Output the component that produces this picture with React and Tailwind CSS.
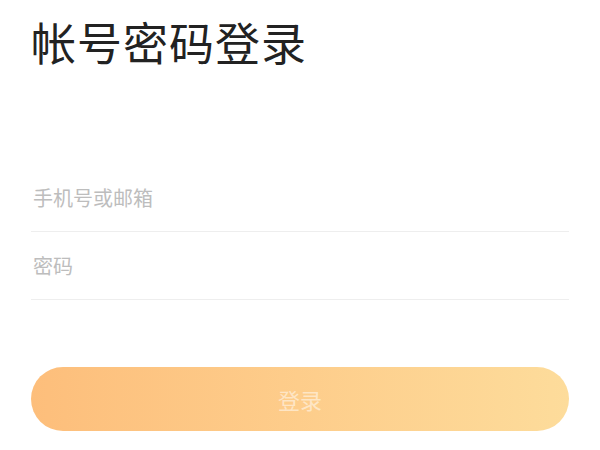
import React, { useState } from "react";

export default function App() {
  const [account, setAccount] = useState("");
  const [password, setPassword] = useState("");

  return (
    <div
      className="w-[600px] h-[450px] bg-white overflow-hidden px-[31px]"
      style={{ fontFamily: '"Noto Sans CJK SC", "Noto Sans", sans-serif' }}
    >
      {/* title */}
      <h1 className="pt-[19px] text-[45px] leading-[45px] font-normal tracking-[1px] text-[#222222]">
        帐号密码登录
      </h1>

      {/* form */}
      <form className="mt-[100px]" onSubmit={(e) => e.preventDefault()}>
        <div className="h-[68px] flex items-center border-b border-[#eeeeee]">
          <input
            className="w-full pl-[2px] text-[20px] leading-[20px] text-[#333] placeholder:text-[#bdbdbd] outline-none bg-transparent"
            placeholder="手机号或邮箱"
            value={account}
            onChange={(e) => setAccount(e.target.value)}
          />
        </div>
        <div className="h-[68px] flex items-center border-b border-[#eeeeee]">
          <input
            type="password"
            className="w-full pl-[2px] text-[20px] leading-[20px] text-[#333] placeholder:text-[#bdbdbd] outline-none bg-transparent"
            placeholder="密码"
            value={password}
            onChange={(e) => setPassword(e.target.value)}
          />
        </div>

        <button
          type="submit"
          className="mt-[67px] w-full h-[64px] rounded-full bg-gradient-to-r from-[#fdbe7b] to-[#fddc9b] text-[22px] text-white/50"
        >
          登录
        </button>
      </form>
    </div>
  );
}
